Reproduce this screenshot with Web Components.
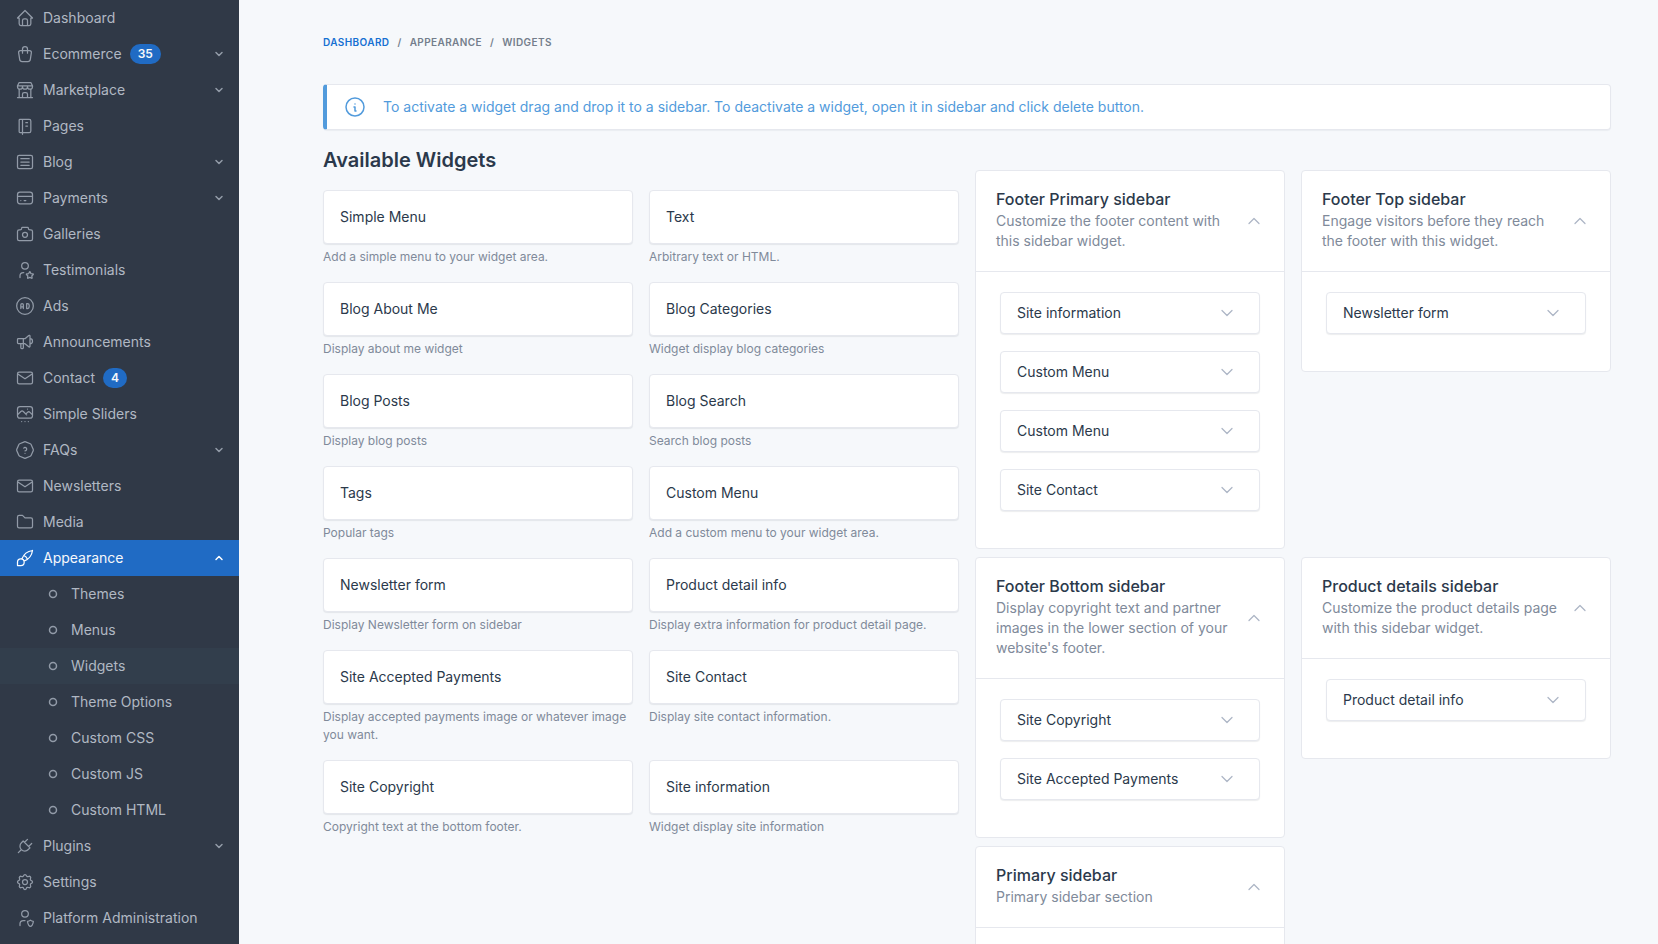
<!DOCTYPE html>
<html lang="en">
<head>
<meta charset="utf-8">
<meta name="viewport" content="width=device-width, initial-scale=1">
<title>Widgets</title>
<style>
html { scrollbar-width: none; }
body {
  margin: 0;
  background: #f6f8fb;
  color: #2b394b;
  font: 400 14px/20px Inter, "Liberation Sans", sans-serif;
  --brand: #206bc4;
  --info: #529bdc;
  --muted: #808a9a;
  --faint: #adb6c6;
  --line: #e6e8ee;
  --surface: #ffffff;
  --nav: #303947;
}
</style>
</head>
<body>
<admin-shell>
  <side-nav slot="nav">
    <nav-item icon="home">Dashboard</nav-item>
    <nav-item icon="bag" badge="35" toggle="down">Ecommerce</nav-item>
    <nav-item icon="store" toggle="down">Marketplace</nav-item>
    <nav-item icon="notebook">Pages</nav-item>
    <nav-item icon="article" toggle="down">Blog</nav-item>
    <nav-item icon="card" toggle="down">Payments</nav-item>
    <nav-item icon="camera">Galleries</nav-item>
    <nav-item icon="userStar">Testimonials</nav-item>
    <nav-item icon="ad">Ads</nav-item>
    <nav-item icon="speaker">Announcements</nav-item>
    <nav-item icon="mail" badge="4">Contact</nav-item>
    <nav-item icon="slides">Simple Sliders</nav-item>
    <nav-item icon="help" toggle="down">FAQs</nav-item>
    <nav-item icon="mail">Newsletters</nav-item>
    <nav-item icon="folder">Media</nav-item>
    <nav-item icon="brush" toggle="up" active>Appearance</nav-item>
    <nav-item sub>Themes</nav-item>
    <nav-item sub>Menus</nav-item>
    <nav-item sub current>Widgets</nav-item>
    <nav-item sub>Theme Options</nav-item>
    <nav-item sub>Custom CSS</nav-item>
    <nav-item sub>Custom JS</nav-item>
    <nav-item sub>Custom HTML</nav-item>
    <nav-item icon="plug" toggle="down">Plugins</nav-item>
    <nav-item icon="settings">Settings</nav-item>
    <nav-item icon="userShield">Platform Administration</nav-item>
  </side-nav>

  <bread-crumbs></bread-crumbs>
  <info-alert>To activate a widget drag and drop it to a sidebar. To deactivate a widget, open it in sidebar and click delete button.</info-alert>
  <widget-board>
    <widget-card name="Simple Menu">Add a simple menu to your widget area.</widget-card>
    <widget-card name="Text">Arbitrary text or HTML.</widget-card>
    <widget-card name="Blog About Me">Display about me widget</widget-card>
    <widget-card name="Blog Categories">Widget display blog categories</widget-card>
    <widget-card name="Blog Posts">Display blog posts</widget-card>
    <widget-card name="Blog Search">Search blog posts</widget-card>
    <widget-card name="Tags">Popular tags</widget-card>
    <widget-card name="Custom Menu">Add a custom menu to your widget area.</widget-card>
    <widget-card name="Newsletter form">Display Newsletter form on sidebar</widget-card>
    <widget-card name="Product detail info">Display extra information for product detail page.</widget-card>
    <widget-card name="Site Accepted Payments">Display accepted payments image or whatever image you want.</widget-card>
    <widget-card name="Site Contact">Display site contact information.</widget-card>
    <widget-card name="Site Copyright">Copyright text at the bottom footer.</widget-card>
    <widget-card name="Site information">Widget display site information</widget-card>

    <sidebar-area slot="areas" name="Footer Primary sidebar" note="Customize the footer content with this sidebar widget.">
      <placed-widget>Site information</placed-widget>
      <placed-widget>Custom Menu</placed-widget>
      <placed-widget>Custom Menu</placed-widget>
      <placed-widget>Site Contact</placed-widget>
    </sidebar-area>
    <sidebar-area slot="areas" name="Footer Top sidebar" note="Engage visitors before they reach the footer with this widget.">
      <placed-widget>Newsletter form</placed-widget>
    </sidebar-area>
    <sidebar-area slot="areas" name="Footer Bottom sidebar" note="Display copyright text and partner images in the lower section of your website's footer.">
      <placed-widget>Site Copyright</placed-widget>
      <placed-widget>Site Accepted Payments</placed-widget>
    </sidebar-area>
    <sidebar-area slot="areas" name="Product details sidebar" note="Customize the product details page with this sidebar widget.">
      <placed-widget>Product detail info</placed-widget>
    </sidebar-area>
    <sidebar-area slot="areas" name="Primary sidebar" note="Primary sidebar section"></sidebar-area>
  </widget-board>
</admin-shell>

<script>
const user = "M8 7a4 4 0 1 0 8 0a4 4 0 0 0 -8 0";
const ICONS = {
  home: "M5 12l-2 0l9 -9l9 9l-2 0M5 12v7a2 2 0 0 0 2 2h10a2 2 0 0 0 2 -2v-7M9 21v-6a2 2 0 0 1 2 -2h2a2 2 0 0 1 2 2v6",
  bag: "M6.331 8h11.339a2 2 0 0 1 1.977 2.304l-1.255 8.152a3 3 0 0 1 -2.966 2.544h-6.852a3 3 0 0 1 -2.965 -2.544l-1.255 -8.152a2 2 0 0 1 1.977 -2.304zM9 11v-5a3 3 0 0 1 6 0v5",
  store: "M3 21l18 0M3 7v1a3 3 0 0 0 6 0v-1m0 1a3 3 0 0 0 6 0v-1m0 1a3 3 0 0 0 6 0v-1h-18l2 -4h14l2 4M5 21l0 -10.15M19 21l0 -10.15M9 21v-4a2 2 0 0 1 2 -2h2a2 2 0 0 1 2 2v4",
  notebook: "M6 4h11a2 2 0 0 1 2 2v12a2 2 0 0 1 -2 2h-11a1 1 0 0 1 -1 -1v-14a1 1 0 0 1 1 -1m3 0v18M13 8l2 0M13 12l2 0",
  article: "M3 6a2 2 0 0 1 2 -2h14a2 2 0 0 1 2 2v12a2 2 0 0 1 -2 2h-14a2 2 0 0 1 -2 -2zM7 8h10M7 12h10M7 16h10",
  card: "M3 8a3 3 0 0 1 3 -3h12a3 3 0 0 1 3 3v8a3 3 0 0 1 -3 3h-12a3 3 0 0 1 -3 -3zM3 10l18 0M7 15l.01 0M11 15l2 0",
  camera: "M5 7h1a2 2 0 0 0 2 -2a1 1 0 0 1 1 -1h6a1 1 0 0 1 1 1a2 2 0 0 0 2 2h1a2 2 0 0 1 2 2v9a2 2 0 0 1 -2 2h-14a2 2 0 0 1 -2 -2v-9a2 2 0 0 1 2 -2M9 13a3 3 0 1 0 6 0a3 3 0 0 0 -6 0",
  userStar: user + "M6 21v-2a4 4 0 0 1 4 -4h.5M17.8 20.817l-2.172 1.138a.392 .392 0 0 1 -.568 -.41l.415 -2.411l-1.757 -1.707a.389 .389 0 0 1 .217 -.665l2.428 -.352l1.086 -2.193a.392 .392 0 0 1 .702 0l1.086 2.193l2.428 .352a.39 .39 0 0 1 .217 .665l-1.757 1.707l.414 2.41a.39 .39 0 0 1 -.567 .411l-2.172 -1.138z",
  ad: "M2 12a10 10 0 1 0 20 0a10 10 0 1 0 -20 0M7 15v-4.5a1.5 1.5 0 0 1 3 0v4.5M7 13h3M14 9v6h1a2 2 0 0 0 2 -2v-2a2 2 0 0 0 -2 -2h-1z",
  speaker: "M18 8a3 3 0 0 1 0 6M10 8v11a1 1 0 0 1 -1 1h-1a1 1 0 0 1 -1 -1v-5M12 8h0l4.524 -3.77a.9 .9 0 0 1 1.476 .692v12.156a.9 .9 0 0 1 -1.476 .692l-4.524 -3.77h-8a1 1 0 0 1 -1 -1v-4a1 1 0 0 1 1 -1h8",
  mail: "M3 7a2 2 0 0 1 2 -2h14a2 2 0 0 1 2 2v10a2 2 0 0 1 -2 2h-14a2 2 0 0 1 -2 -2v-10zM3 7l9 6l9 -6",
  slides: "M15 6l.01 0M3 6a3 3 0 0 1 3 -3h12a3 3 0 0 1 3 3v8a3 3 0 0 1 -3 3h-12a3 3 0 0 1 -3 -3zM3 13l4 -4a3 5 0 0 1 3 0l4 4M13 12l2 -2a3 5 0 0 1 3 0l3 3M8 21l.01 0M12 21l.01 0M16 21l.01 0",
  help: "M12.802 2.165l5.575 2.389c.48 .206 .863 .589 1.07 1.07l2.388 5.574c.22 .512 .22 1.092 0 1.604l-2.389 5.575c-.206 .48 -.589 .863 -1.07 1.07l-5.574 2.388c-.512 .22 -1.092 .22 -1.604 0l-5.575 -2.389a2.036 2.036 0 0 1 -1.07 -1.07l-2.388 -5.574a2.036 2.036 0 0 1 0 -1.604l2.389 -5.575c.206 -.48 .589 -.863 1.07 -1.07l5.574 -2.388a2.036 2.036 0 0 1 1.604 0zM12 16v.01M12 13a2 2 0 0 0 .914 -3.782a1.98 1.98 0 0 0 -2.414 .483",
  folder: "M5 4h4l3 3h7a2 2 0 0 1 2 2v8a2 2 0 0 1 -2 2h-14a2 2 0 0 1 -2 -2v-11a2 2 0 0 1 2 -2",
  brush: "M3 21v-4a4 4 0 1 1 4 4h-4M21 3a16 16 0 0 0 -12.8 10.2M21 3a16 16 0 0 1 -10.2 12.8M10.6 9a9 9 0 0 1 4.4 4.4",
  plug: "M9.785 6l8.215 8.215l-2.054 2.054a5.81 5.81 0 1 1 -8.215 -8.215l2.054 -2.054zM4 20l3.5 -3.5M15 4l-3.5 3.5M20 9l-3.5 3.5",
  settings: "M10.325 4.317c.426 -1.756 2.924 -1.756 3.35 0a1.724 1.724 0 0 0 2.573 1.066c1.543 -.94 3.31 .826 2.37 2.37a1.724 1.724 0 0 0 1.065 2.572c1.756 .426 1.756 2.924 0 3.35a1.724 1.724 0 0 0 -1.066 2.573c.94 1.543 -.826 3.31 -2.37 2.37a1.724 1.724 0 0 0 -2.572 1.065c-.426 1.756 -2.924 1.756 -3.35 0a1.724 1.724 0 0 0 -2.573 -1.066c-1.543 .94 -3.31 -.826 -2.37 -2.37a1.724 1.724 0 0 0 -1.065 -2.572c-1.756 -.426 -1.756 -2.924 0 -3.35a1.724 1.724 0 0 0 1.066 -2.573c-.94 -1.543 .826 -3.31 2.37 -2.37c1 .608 2.296 .07 2.572 -1.065zM9 12a3 3 0 1 0 6 0a3 3 0 0 0 -6 0",
  userShield: user + "M6 21v-2a4 4 0 0 1 4 -4h2M22 16c0 4 -2.5 6 -3.5 6s-3.5 -2 -3.5 -6c1 0 2.5 -.5 3.5 -1.5c1 1 2.5 1.5 3.5 1.5z",
  info: "M3 12a9 9 0 1 0 18 0a9 9 0 0 0 -18 0M12 9h.01M11 12h1v4h1",
  dot: "M5 12a7 7 0 1 0 14 0a7 7 0 0 0 -14 0",
  down: "M6 9l6 6l6 -6",
  up: "M6 15l6 -6l6 6"
};

// Registers an element whose shadow root is rendered from its attributes.
function define(tag, render) {
  customElements.define(tag, class extends HTMLElement {
    constructor() {
      super();
      this.attachShadow({ mode: "open" });
    }
    connectedCallback() {
      const t = document.createElement("template");
      t.innerHTML = render(this);
      this.shadowRoot.replaceChildren(t.content.cloneNode(true));
    }
  });
}

define("ui-icon", el => `
  <style>
    :host { display: block; flex: none; width: 20px; height: 20px; }
    svg { display: block; width: 100%; height: 100%; fill: none; stroke: currentColor;
      stroke-width: var(--stroke, 1.5); stroke-linecap: round; stroke-linejoin: round; }
  </style>
  <svg viewBox="0 0 24 24" aria-hidden="true"><path d="${ICONS[el.getAttribute("name")]}"/></svg>`);

define("admin-shell", () => `
  <style>
    :host { display: grid; grid-template-columns: 239px minmax(0, 1fr); min-height: 100vh; }
    main { padding: 32px 47px 32px 84px; }
  </style>
  <slot name="nav"></slot>
  <main><slot></slot></main>`);

define("side-nav", () => `
  <style>
    :host { display: block; background: var(--nav); }
    nav { display: flex; flex-direction: column; }
  </style>
  <nav aria-label="Main"><slot></slot></nav>`);

define("nav-item", el => {
  const badge = el.getAttribute("badge"), toggle = el.getAttribute("toggle");
  return `
  <style>
    :host { display: block; color: #b0b8c3; }
    :host([active]) { background: var(--brand); color: #f6f8fb; }
    :host([current]) { background: #323e4c; }
    a { display: flex; align-items: center; gap: 8px; height: 36px; padding: 0 14px 0 15px;
      color: inherit; text-decoration: none; }
    :host([sub]) a { padding-left: 47px; gap: 12px; }
    .icon { color: #929ba8; }
    .dot { width: 12px; height: 12px; --stroke: 3; color: #929ba8; }
    .badge { padding: 0 8px; border-radius: 10px; background: var(--brand); color: #f6f8fb;
      font-size: 12px; font-weight: 600; line-height: 20px; }
    .toggle { width: 12px; height: 12px; margin-left: auto; --stroke: 3; color: #929ba8; }
    :host([active]) ui-icon { color: #ffffff; }
  </style>
  <a href="#">
    ${el.hasAttribute("sub") ? `<ui-icon class="dot" name="dot"></ui-icon>` : `<ui-icon class="icon" name="${el.getAttribute("icon")}"></ui-icon>`}
    <span><slot></slot></span>
    ${badge ? `<span class="badge">${badge}</span>` : ""}
    ${toggle ? `<ui-icon class="toggle" name="${toggle}"></ui-icon>` : ""}
  </a>`;
});

define("bread-crumbs", () => `
  <style>
    :host { display: block; margin-bottom: 32px; }
    ol { display: flex; gap: 8px; margin: 0; padding: 0; list-style: none; color: #747e8c;
      font-size: 10px; font-weight: 600; line-height: 20px; letter-spacing: .04em; text-transform: uppercase; }
    li { display: flex; gap: 8px; }
    li + li::before { content: "/"; }
    a { color: inherit; text-decoration: none; }
    .home { color: #1670d2; }
  </style>
  <nav aria-label="Breadcrumb"><ol>
    <li><a class="home" href="#">Dashboard</a></li>
    <li><a href="#">Appearance</a></li>
    <li aria-current="page">Widgets</li>
  </ol></nav>`);

define("info-alert", () => `
  <style>
    :host { display: flex; align-items: center; gap: 16px; margin-bottom: 16px; padding: 10px 16px;
      border: 1px solid var(--line); border-left: 4px solid var(--info); border-radius: 4px;
      background: var(--surface); color: var(--info); box-shadow: 0 1px 1px #1824330d; }
    ui-icon { width: 24px; height: 24px; }
  </style>
  <ui-icon name="info"></ui-icon>
  <div role="status"><slot></slot></div>`);

define("widget-board", () => `
  <style>
    :host { display: grid; grid-template-columns: repeat(2, minmax(0, 1fr)); gap: 16px; align-items: start; }
    h2 { margin: 0 0 16px; font-size: 20px; font-weight: 600; line-height: 28px; }
    .grid { display: grid; grid-template-columns: repeat(2, minmax(0, 1fr)); gap: 16px; }
    .areas { row-gap: 8px; margin-top: 24px; align-items: start; }
  </style>
  <section>
    <h2>Available Widgets</h2>
    <div class="grid"><slot></slot></div>
  </section>
  <section class="grid areas"><slot name="areas"></slot></section>`);

define("widget-card", el => `
  <style>
    :host { display: block; }
    div { padding: 16px; border: 1px solid var(--line); border-radius: 4px; background: var(--surface);
      box-shadow: 0 1px 1px #18243314; cursor: move; }
    p { margin: 4px 0 0; color: var(--muted); font-size: 12px; line-height: 18px; }
  </style>
  <div>${el.getAttribute("name")}</div>
  <p><slot></slot></p>`);

define("sidebar-area", el => `
  <style>
    :host { display: block; border: 1px solid var(--line); border-radius: 4px; background: var(--surface); }
    header { display: flex; align-items: center; padding: 20px; border-bottom: 1px solid var(--line); }
    .text { flex: 1; min-width: 0; }
    h3 { margin: 0 0 4px; font-size: 16px; font-weight: 500; line-height: 16px; }
    p { margin: 0; padding-right: 4px; color: var(--muted); }
    button { padding: 0; border: 0; background: none; color: var(--faint); }
    .body { padding: 20px 24px; }
  </style>
  <header>
    <div class="text"><h3>${el.getAttribute("name")}</h3><p>${el.getAttribute("note")}</p></div>
    <button type="button" aria-label="Collapse"><ui-icon name="up"></ui-icon></button>
  </header>
  <div class="body"><slot></slot></div>`);

define("placed-widget", () => `
  <style>
    :host { display: block; margin-bottom: 17px; }
    button { display: flex; align-items: center; justify-content: space-between; width: 100%; height: 42px;
      padding: 0 22px 0 16px; border: 1px solid var(--line); border-radius: 4px; background: var(--surface);
      box-shadow: 0 1px 1px #18243314; color: inherit; font: inherit; text-align: left; }
    ui-icon { color: var(--faint); }
  </style>
  <button type="button" aria-expanded="false"><span><slot></slot></span><ui-icon name="down"></ui-icon></button>`);
</script>
</body>
</html>
